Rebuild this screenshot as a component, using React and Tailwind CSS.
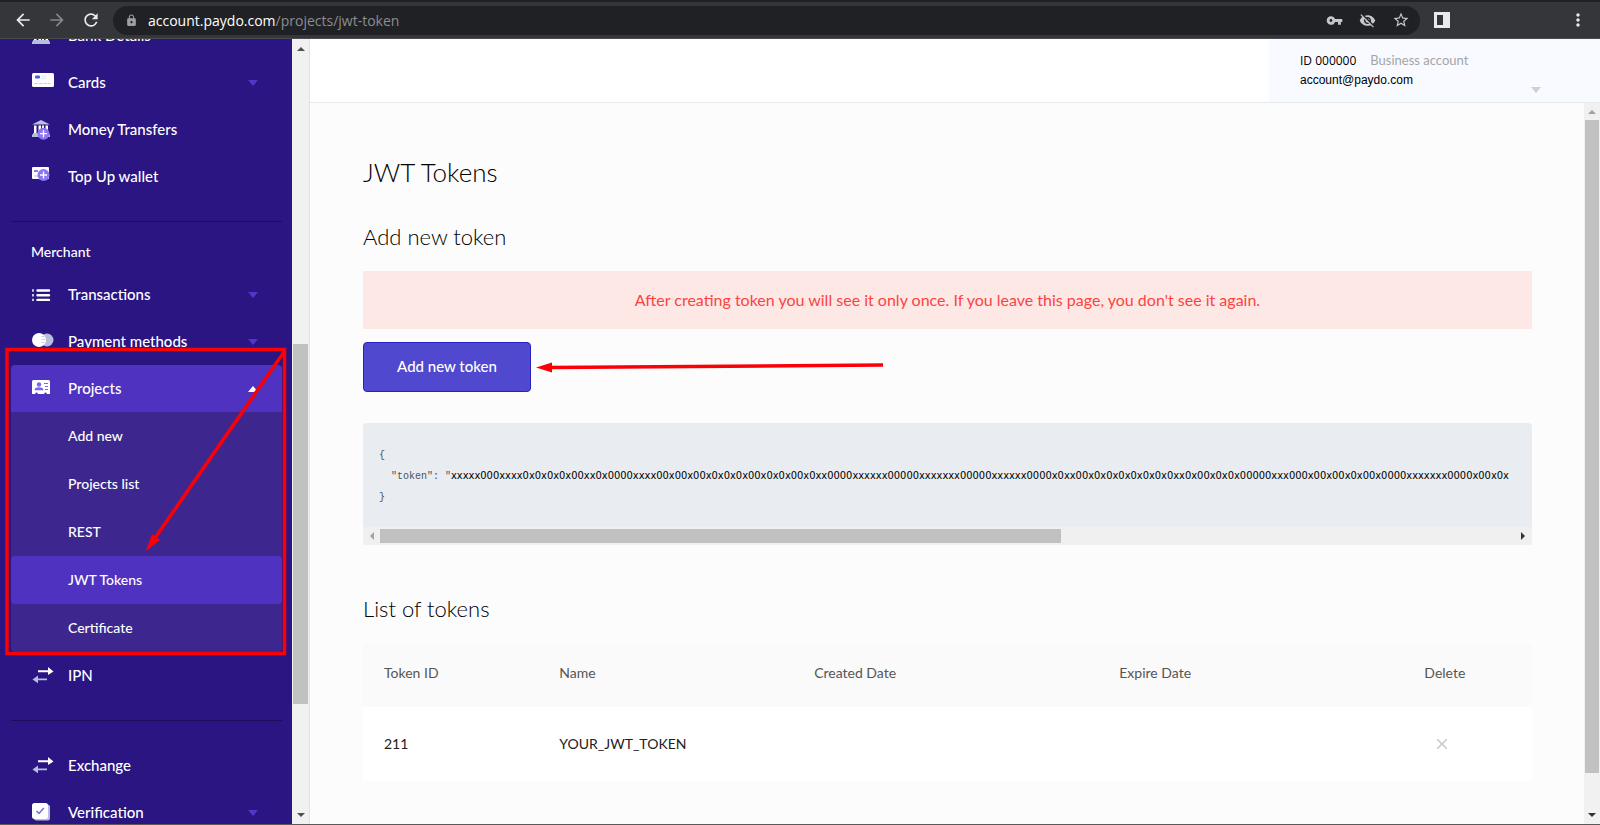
import {
  MdArrowBack,
  MdArrowForward,
  MdRefresh,
  MdLock,
  MdVpnKey,
  MdVisibilityOff,
  MdStarBorder,
  MdMoreVert,
} from "react-icons/md";

const TOKEN =
  "xxxxx000xxxx0x0x0x0x00xx0x0000xxxx00x00x00x0x0x0x00x0x0x00x0xx0000xxxxxx00000xxxxxxx00000xxxxxx0000x0xx00x0x0x0x0x0x0x0xx0x00x0x0x00000xxx000x00x00x0x00x0000xxxxxxx0000x00x0x";

function Caret({ up = false, className = "" }) {
  return (
    <svg viewBox="0 0 10 6" className={`h-[6px] w-[10px] ${className}`} fill="currentColor" aria-hidden="true">
      <path d={up ? "M0 6 5 0l5 6z" : "M0 0h10L5 6z"} />
    </svg>
  );
}

function ScrollArrow({ dir, className = "" }) {
  const shapes = {
    up: "M4 10 8 6l4 4z",
    down: "M4 6h8l-4 4z",
    left: "M10 4v8L6 8z",
    right: "M6 4v8l4-4z",
  };
  return (
    <svg viewBox="0 0 16 16" className={`size-4 shrink-0 ${className}`} fill="currentColor" aria-hidden="true">
      <path d={shapes[dir]} />
    </svg>
  );
}

function Plus({ x, y }) {
  return (
    <g>
      <circle cx={x} cy={y} r="6" fill="#8d76f2" />
      <path d={`M${x - 3.5} ${y}h7M${x} ${y - 3.5}v7`} stroke="#fff" strokeWidth="1.3" />
    </g>
  );
}

function BankShape() {
  return (
    <g>
      <path d="M0 5.5 9 1l9 4.500z" fill="#b6bfdd" />
      <path d="M2 6.500h2.500V14H2zM6.500 6.500H9V14H6.500zM10 6.500h2V14h-2zM13.500 6.500H16V14h-2.500z" fill="#fff" />
      <path d="M1 14h16v1.500h1V18H0v-2.500h1z" fill="#b6bfdd" />
    </g>
  );
}

const icons = {
  bank: (
    <svg viewBox="0 0 22 20" className="h-5 w-[22px]">
      <BankShape />
    </svg>
  ),
  card: (
    <svg viewBox="0 0 22 20" className="h-5 w-[22px]">
      <rect x="0" y="0" width="22" height="14" rx="1.500" fill="#fff" />
      <path d="M9 2h5v4.500H9z" fill="#f1f3fa" />
      <rect x="3" y="2.500" width="5" height="3" rx="1" fill="#3f5bf0" />
      <path d="M2.500 10.500h16" stroke="#c9cfe2" strokeWidth="1.200" strokeDasharray="3.500 1" />
    </svg>
  ),
  transfer: (
    <svg viewBox="0 1 22 22" className="h-[22px] w-[22px]">
      <BankShape />
      <Plus x={11.5} y={14.7} />
    </svg>
  ),
  topup: (
    <svg viewBox="0 1 22 20" className="h-5 w-[22px]">
      <rect x="0" y="1" width="17" height="12" rx="1" fill="#fff" />
      <rect x="2" y="4" width="4" height="2" rx=".5" fill="#8d76f2" />
      <path d="M2 10h5" stroke="#c9cfe2" strokeWidth="1.200" />
      <Plus x={11.5} y={9} />
    </svg>
  ),
  list: (
    <svg viewBox="0 0 22 20" className="h-5 w-[22px]" stroke="#fff" strokeWidth="2.400">
      <path d="M5.500 5.500h11.500M5.500 10.200h11.500M5.500 14.900h11.500" strokeLinecap="round" />
      <path d="M-.5 5.500h2.500M-.5 10.200h2.500M-.5 14.900h2.500" stroke="#c3cae4" />
    </svg>
  ),
  methods: (
    <svg viewBox="0 0 22 20" className="h-5 w-[22px]">
      <circle cx="15" cy="8" r="6.500" fill="#b6bfdd" />
      <circle cx="7" cy="8" r="7" fill="#fff" />
      <path d="M9.500 4.500h3M9.500 7.500h3.500M9.500 10.500h3" stroke="#b6bfdd" strokeWidth=".7" />
    </svg>
  ),
  projects: (
    <svg viewBox="0 0 22 20" className="h-5 w-[22px]">
      <path d="M1.500 1h15A1.500 1.500 0 0 1 18 2.500V15h-3l-1-1.500H13L12 15H6l-1-1.500H4L3 15H0V2.500A1.500 1.500 0 0 1 1.500 1z" fill="#fff" />
      <circle cx="7" cy="5.500" r="2.200" fill="#7c66ee" />
      <path d="M2.500 11.300c0-2 1.500-3 4.500-3s4.500 1 4.500 3z" fill="#7c66ee" />
      <path d="M12 4.500h4M13 7.500h3M13 10.500h3" stroke="#7c66ee" strokeWidth="1" />
    </svg>
  ),
  swap: (
    <svg viewBox="0 0 22 20" className="h-5 w-[22px]">
      <path d="M6 4.200h10V1l5.500 4.500L16 9V6.300H6z" fill="#fff" />
      <path d="M15 12.500H6V9.500L.5 13.500 6 17.300v-3H15z" fill="#b6bfdd" />
    </svg>
  ),
  verify: (
    <svg viewBox="0 0 22 20" className="h-5 w-[22px]">
      <rect x="2" y="1.500" width="16" height="16" rx="2.500" fill="#b6bfdd" />
      <rect x="0" y="0" width="16" height="16" rx="2.500" fill="#fff" />
      <path d="m4.500 8 2.500 2.500 4.800-5.500" fill="none" stroke="#7c66ee" strokeWidth="1.500" />
    </svg>
  ),
};

function Item({ icon, label, caret, active }) {
  return (
    <a
      href="#"
      aria-current={active ? "true" : undefined}
      className={`flex h-[47px] items-center pr-6 pl-[21px] ${active ? "rounded-t-[4px] bg-[#4f32c0]" : ""}`}
    >
      <span className="flex h-6 w-9 shrink-0 items-start pt-[2px]">{icons[icon]}</span>
      <span className="flex-1 whitespace-nowrap">{label}</span>
      {caret && <Caret up={active} className={active ? "text-white" : "text-[#5535c8]"} />}
    </a>
  );
}

function SubItem({ label, active }) {
  return (
    <a
      href="#"
      className={`flex h-12 items-center pb-px pl-[57px] text-[14px] ${active ? "rounded-[4px] bg-[#4f32c0]" : ""}`}
    >
      {label}
    </a>
  );
}

function Sidebar() {
  return (
    <aside className="w-[292px] shrink-0 overflow-hidden bg-[#2a1582] text-[15px] font-medium text-white">
      <nav className="-mt-[27px] mr-[10px] ml-[11px]">
        <Item icon="bank" label="Bank Details" />
        <Item icon="card" label="Cards" caret />
        <Item icon="transfer" label="Money Transfers" />
        <Item icon="topup" label="Top Up wallet" />
        <hr className="mt-[21px] border-t border-[#1d0e5c]" />
        <h2 className="pt-5 pb-[9px] pl-5 text-[14px] leading-5">Merchant</h2>
        <Item icon="list" label="Transactions" caret />
        <Item icon="methods" label="Payment methods" caret />
        <Item icon="projects" label="Projects" caret active />
        <div className="rounded-b-[4px] bg-[#3d278f]">
          <SubItem label="Add new" />
          <SubItem label="Projects list" />
          <SubItem label="REST" />
          <SubItem label="JWT Tokens" active />
          <SubItem label="Certificate" />
        </div>
        <Item icon="swap" label="IPN" />
        <hr className="my-[21px] border-t border-[#1d0e5c]" />
        <Item icon="swap" label="Exchange" />
        <Item icon="verify" label="Verification" caret />
      </nav>
    </aside>
  );
}

function BrowserBar() {
  return (
    <header className="flex h-[39px] shrink-0 items-center border-t-2 border-b border-t-[#202124] border-b-[#4a4b4e] bg-[#35363a] text-[#e8eaed]">
      <div className="flex w-[113px] shrink-0 items-center gap-[14px] pl-[13px]">
        <button aria-label="Back"><MdArrowBack size={20} /></button>
        <button aria-label="Forward" className="text-[#85868a]"><MdArrowForward size={20} /></button>
        <button aria-label="Reload"><MdRefresh size={20} /></button>
      </div>
      <div className="flex h-[29px] flex-1 items-center rounded-full bg-[#202124] pr-[10px] pl-3">
        <MdLock size={13} className="text-[#9aa0a6]" />
        <span className="ml-[10px] flex-1 font-['Open_Sans',sans-serif] text-[14px] text-[#8b8d91]">
          <span className="text-white">account.paydo.com</span>/projects/jwt-token
        </span>
        <div className="flex items-center gap-4 text-[#c4c7cb]">
          <button aria-label="Passwords"><MdVpnKey size={17} /></button>
          <button aria-label="Third-party cookies blocked"><MdVisibilityOff size={17} /></button>
          <button aria-label="Bookmark"><MdStarBorder size={18} /></button>
        </div>
      </div>
      <div className="flex w-[180px] shrink-0 items-center justify-between pr-3 pl-[14px]">
        <button aria-label="Side panel">
          <svg viewBox="0 0 16 16" className="size-4">
            <path d="M0 0h16v16H0zM3 3v10h6V3z" fill="#e8eaed" fillRule="evenodd" />
          </svg>
        </button>
        <button aria-label="Menu"><MdMoreVert size={20} /></button>
      </div>
    </header>
  );
}

function AccountBar() {
  return (
    <div className="flex h-16 shrink-0 justify-end border-b border-[#e3ebf1] bg-white">
      <button className="flex w-[331px] items-end justify-between bg-[#f8faff] pb-[13px] pl-[31px] text-left">
        <span className="flex flex-col text-black">
          <span className="flex h-[19px] items-center gap-[14px]">
            <span className="font-['Open_Sans',sans-serif] text-[12px]">ID 000000</span>
            <span className="text-[13px] text-[#a3a5a9]">Business account</span>
          </span>
          <span className="flex h-[19px] items-center font-['Liberation_Sans',sans-serif] text-[12px]">account@paydo.com</span>
        </span>
        <Caret className="mr-[59px] -mb-[4px] text-[#cfd0d3]" />
      </button>
    </div>
  );
}

function TokenTable() {
  return (
    <table className="mt-5 w-full table-fixed text-left text-[14px]">
      <colgroup>
        <col className="w-[15%]" />
        <col className="w-[21.8%]" />
        <col className="w-[26.1%]" />
        <col className="w-[26.1%]" />
        <col />
      </colgroup>
      <thead>
        <tr className="h-[63px] bg-[#fafafa] text-[#555]">
          <th className="pb-[6px] pl-[21px] font-normal">Token ID</th>
          <th className="pb-[6px] pl-[21px] font-normal">Name</th>
          <th className="pb-[6px] pl-[21px] font-normal">Created Date</th>
          <th className="pb-[6px] pl-[21px] font-normal">Expire Date</th>
          <th className="pb-[6px] pl-[21px] font-normal">Delete</th>
        </tr>
      </thead>
      <tbody>
        <tr className="h-[74px] bg-white text-[#222]">
          <td className="pb-[2px] pl-[21px]">211</td>
          <td className="pb-[2px] pl-[21px]">YOUR_JWT_TOKEN</td>
          <td />
          <td />
          <td className="pl-[34px]">
            <button aria-label="Delete token" className="block">
              <svg viewBox="0 0 10 10" className="size-[10px]" stroke="#c2c2c2" strokeWidth="1.300">
                <path d="m0 0 10 10M10 0 0 10" />
              </svg>
            </button>
          </td>
        </tr>
      </tbody>
    </table>
  );
}

function Content() {
  return (
    <div className="min-w-0 flex-1 pt-[53px] pr-[52px] pl-[52px] text-black">
      <h1 className="text-[26px] leading-8 font-light">JWT Tokens</h1>
      <h2 className="mt-[34px] text-[22px] leading-[30px] font-light">Add new token</h2>
      <p className="mt-[19px] bg-[#fde8e6] text-center text-[16px] leading-[58px] text-[#fb4440]">
        After creating token you will see it only once. If you leave this page, you don't see it again.
      </p>
      <button className="mt-[13px] block h-[50px] w-[168px] rounded-[4px] border border-[#2b1fc4] bg-[#5048cf] pb-[2px] text-[15px] font-medium text-white">
        Add new token
      </button>
      <div className="mt-[31px] overflow-hidden rounded-t-[4px] bg-[#e9ecf1]">
        <pre className="h-[104px] overflow-hidden px-4 pt-[22px] font-['Liberation_Mono',monospace] text-[10px] leading-[21px] text-[#4a5260]">
          {'{\n  "token": "'}
          <span className="font-['DejaVu_Sans_Condensed','Open_Sans',sans-serif] text-[11px] leading-none text-black">{TOKEN}</span>
          {"\n}"}
        </pre>
        <div className="flex h-[18px] items-center bg-[#f0f0f0] px-px">
          <ScrollArrow dir="left" className="text-[#a3a3a3]" />
          <div className="h-full flex-1 py-[2px]">
            <div className="h-full w-3/5 bg-[#c1c1c1]" />
          </div>
          <ScrollArrow dir="right" className="text-[#333]" />
        </div>
      </div>
      <h2 className="mt-[49px] text-[22px] leading-[30px] font-light">List of tokens</h2>
      <TokenTable />
    </div>
  );
}

function Annotations() {
  return (
    <svg className="pointer-events-none absolute top-0 left-0 h-[660px] w-[900px]" fill="none" stroke="#fb0007" aria-hidden="true">
      <rect x="7" y="349.500" width="277.500" height="304" strokeWidth="3.500" />
      <path d="M284 352 155 538" strokeWidth="3.500" />
      <path d="M146 551 152 534 160 540z" fill="#fb0007" stroke="none" />
      <path d="M883 365 550 367.500" strokeWidth="3.500" />
      <path d="M536 367.500 552 362.500V372.500z" fill="#fb0007" stroke="none" />
    </svg>
  );
}

export default function App() {
  return (
    <div className="relative flex h-screen flex-col overflow-hidden border-b border-[#5a5a5a] bg-[#fcfcfc] font-['Lato',sans-serif]">
      <BrowserBar />
      <div className="flex min-h-0 flex-1">
        <Sidebar />
        <div className="flex w-[18px] shrink-0 flex-col items-center border-r border-[#e2e2e2] bg-[#f1f1f1]">
          <ScrollArrow dir="up" className="mt-[2px] text-[#505050]" />
          <div className="flex w-full flex-1 flex-col px-px">
            <div className="flex-[287]" />
            <div className="flex-[361] bg-[#c1c1c1]" />
            <div className="flex-[103]" />
          </div>
          <ScrollArrow dir="down" className="mb-px text-[#505050]" />
        </div>
        <div className="flex min-w-0 flex-1 flex-col">
          <AccountBar />
          <main className="flex min-h-0 flex-1 pl-px">
            <Content />
            <div className="flex w-4 shrink-0 flex-col items-center bg-[#f1f1f1]">
              <ScrollArrow dir="up" className="mt-px text-[#a0a0a0]" />
              <div className="flex w-full flex-1 flex-col px-px">
                <div className="flex-[652] bg-[#c1c1c1]" />
                <div className="flex-[34]" />
              </div>
              <ScrollArrow dir="down" className="mb-px text-[#333]" />
            </div>
          </main>
        </div>
      </div>
      <Annotations />
    </div>
  );
}
